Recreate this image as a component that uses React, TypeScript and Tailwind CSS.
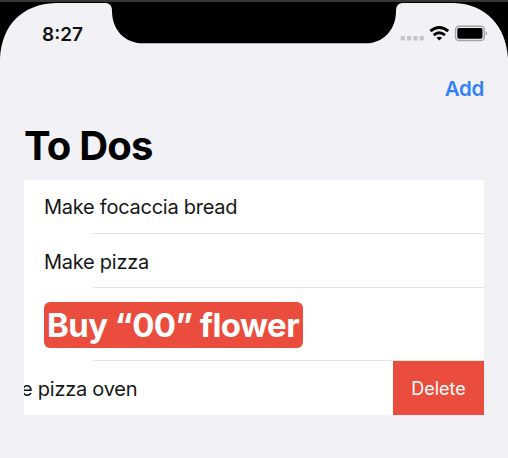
import React from "react";

function StatusBar() {
  return (
    <header className="relative h-[68px] shrink-0">
      <svg className="absolute inset-0" width="508" height="68" viewBox="0 0 508 68">
        <rect width="508" height="68" fill="#000" />
        <rect width="508" height="2" fill="#363636" />
        <path
          d="M0 68V58C2 25 22 4 56 3H106Q112 3.500 112 11C112 29 124 43.300 143 43.300H366C384 43.300 396 29 396 11Q396 3.500 402 3H454C486 4 506 26 508 58V68Z"
          fill="#f2f1f6"
        />
      </svg>
      <div className="relative flex h-[68px] justify-between pt-[22px] pl-[42px] pr-[20px]">
        <span className="mt-px text-[19px] leading-6 font-semibold text-[#111] whitespace-nowrap">8:27</span>
        <svg width="90" height="24" viewBox="398 22 90 24">
          <g fill="#c6c5ca">
            <rect x="400.700" y="36.100" width="4.300" height="4.300" rx="1" />
            <rect x="407" y="36.100" width="4.300" height="4.300" rx="1" />
            <rect x="413.300" y="36.100" width="4.300" height="4.300" rx="1" />
            <rect x="419.600" y="36.100" width="4.300" height="4.300" rx="1" />
          </g>
          <g fill="none" stroke="#000" strokeWidth="2.900">
            <path d="M430.400 31.200Q439.300 23.700 448.200 31.200" />
            <path d="M433.700 35.200Q439.300 30.500 444.900 35.200" />
          </g>
          <path d="M436.500 37.700Q439.300 35.700 442.100 37.700L439.300 40.500Z" fill="#000" />
          <rect x="455.500" y="26.200" width="28.800" height="14.300" rx="3.600" fill="none" stroke="#a3a2a6" strokeWidth="1.400" />
          <rect x="457.300" y="28" width="25.200" height="10.700" rx="1.600" fill="#000" />
          <path d="M485.700 31.300Q488.500 33.300 485.700 35.400Z" fill="#a3a2a6" />
        </svg>
      </div>
    </header>
  );
}

function Separator() {
  return <div className="absolute right-0 bottom-0 left-[69px] h-px bg-[#e4e4e5]" />;
}

export default function App() {
  return (
    <div
      className="flex h-[458px] w-[508px] flex-col overflow-hidden bg-[#f2f1f6] text-black"
      style={{ fontFamily: 'Inter, "Liberation Sans", sans-serif' }}
    >
      <StatusBar />
      <nav className="flex h-[42px] justify-end pt-[7px] pr-6">
        <button className="h-7 text-[20.5px] leading-7 font-semibold tracking-[-0.300px] whitespace-nowrap text-[#3381f6]">Add</button>
      </nav>
      <h1 className="h-[70px] pt-[12px] pl-6 text-[40px] leading-[48px] font-bold tracking-[-0.8px] whitespace-nowrap">
        To Dos
      </h1>
      <ul className="mx-6 flex h-[235px] flex-col overflow-hidden bg-white text-[20px] tracking-[-0.250px] text-[#161616] whitespace-nowrap">
        <li className="relative flex h-[54px] items-center pl-5">
          <span>Make focaccia bread</span>
          <Separator />
        </li>
        <li className="relative flex h-[54px] items-center pt-px pl-5">
          <span>Make pizza</span>
          <Separator />
        </li>
        <li className="relative flex h-[73px] items-center pl-5">
          <span className="mt-px flex h-[46px] w-[259px] items-center rounded-[6px] bg-[#ea4d3d] pl-[3px] text-[33px] leading-[46px] font-bold tracking-[-0.550px] text-white">
            Buy “00” flower
          </span>
          <Separator />
        </li>
        <li className="flex h-[54px] items-center justify-between">
          <span className="-ml-[3px] pt-px">e pizza oven</span>
          <button className="h-[54px] w-[91px] bg-[#ea4d3d] text-[18px] tracking-normal text-white">Delete</button>
        </li>
      </ul>
    </div>
  );
}
